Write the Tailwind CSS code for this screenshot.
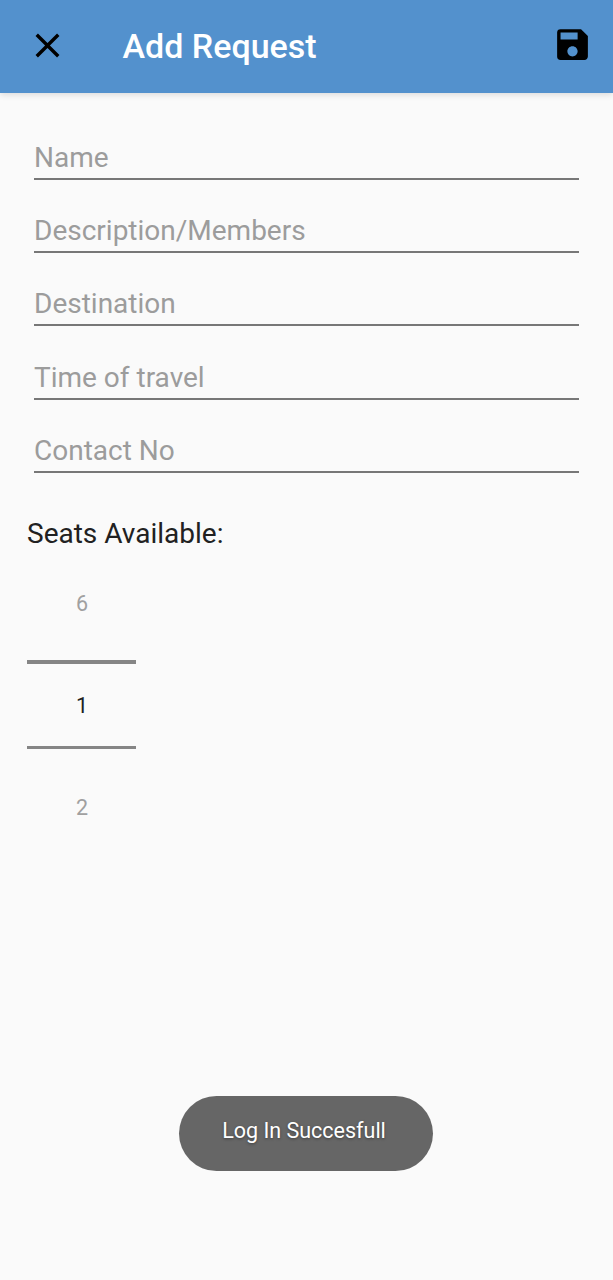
<!DOCTYPE html>
<html lang="en"><head><meta charset="utf-8"><title>Add Request</title>
<script src="https://cdn.jsdelivr.net/npm/@tailwindcss/browser@4"></script></head>
<body class="bg-[#fafafa]">
<div class="relative flex h-[1280px] w-[613px] flex-col overflow-hidden bg-[#fafafa] font-[Roboto,sans-serif]">
<header class="flex h-[93px] shrink-0 items-center bg-[#5391cd] pr-[20.5px] pl-[27px] shadow-[0_2px_6px_rgba(0,0,0,0.12)]">
<svg class="mt-[-3px] size-[41px] shrink-0" viewBox="0 0 24 24"><path d="M19 6.41 17.59 5 12 10.59 6.41 5 5 6.41 10.59 12 5 17.59 6.41 19 12 13.41 17.59 19 19 17.59 13.41 12z"/></svg>
<h1 class="mt-[-2px] ml-[54.5px] flex-1 text-[34px] leading-[40px] font-medium text-white">Add Request</h1>
<svg class="mt-[-4px] size-[41px] shrink-0" viewBox="0 0 24 24"><path d="M17 3H5a2 2 0 0 0-2 2v14a2 2 0 0 0 2 2h14c1.1 0 2-.9 2-2V7l-4-4zm-5 16c-1.66 0-3-1.34-3-3s1.34-3 3-3 3 1.34 3 3-1.34 3-3 3zm3-10H5V5h10v4z"/></svg>
</header>
<main class="flex flex-col">
<div class="mx-[34px] mt-[41px] flex flex-col text-[28px] leading-[47px] text-[#9c9c9c]">
<div class="mb-[27px] h-[46px] border-b-2 border-[#777]">Name</div>
<div class="mb-[27px] h-[46px] border-b-2 border-[#777]">Description/Members</div>
<div class="mb-[28px] h-[46px] border-b-2 border-[#777]">Destination</div>
<div class="mb-[27px] h-[46px] border-b-2 border-[#777]">Time of travel</div>
<div class="h-[46px] border-b-2 border-[#777]">Contact No</div>
</div>
<h2 class="mt-[45px] ml-[27px] text-[28px] leading-[32px] text-[#212121]">Seats Available:</h2>
<div class="mt-[38px] ml-[27px] flex w-[109px] flex-col text-center text-[21.5px] leading-[32px] text-[#a0a0a0]">
<span class="pl-px">6</span>
<span class="mt-[40px] mb-[43px] flex h-[89px] items-center justify-center border-t-4 border-b-3 border-[#858585] pt-px pl-px text-[#212121]">1</span>
<span class="pl-px">2</span>
</div>
</main>
<div class="absolute top-[1096px] left-[179px] flex h-[75px] w-[254px] items-center justify-center rounded-full bg-[#666] pr-[4px] pb-[5px] text-[21.5px] text-white [text-shadow:0_1px_3px_#0006]">Log In Succesfull</div>
</div>
</body></html>
